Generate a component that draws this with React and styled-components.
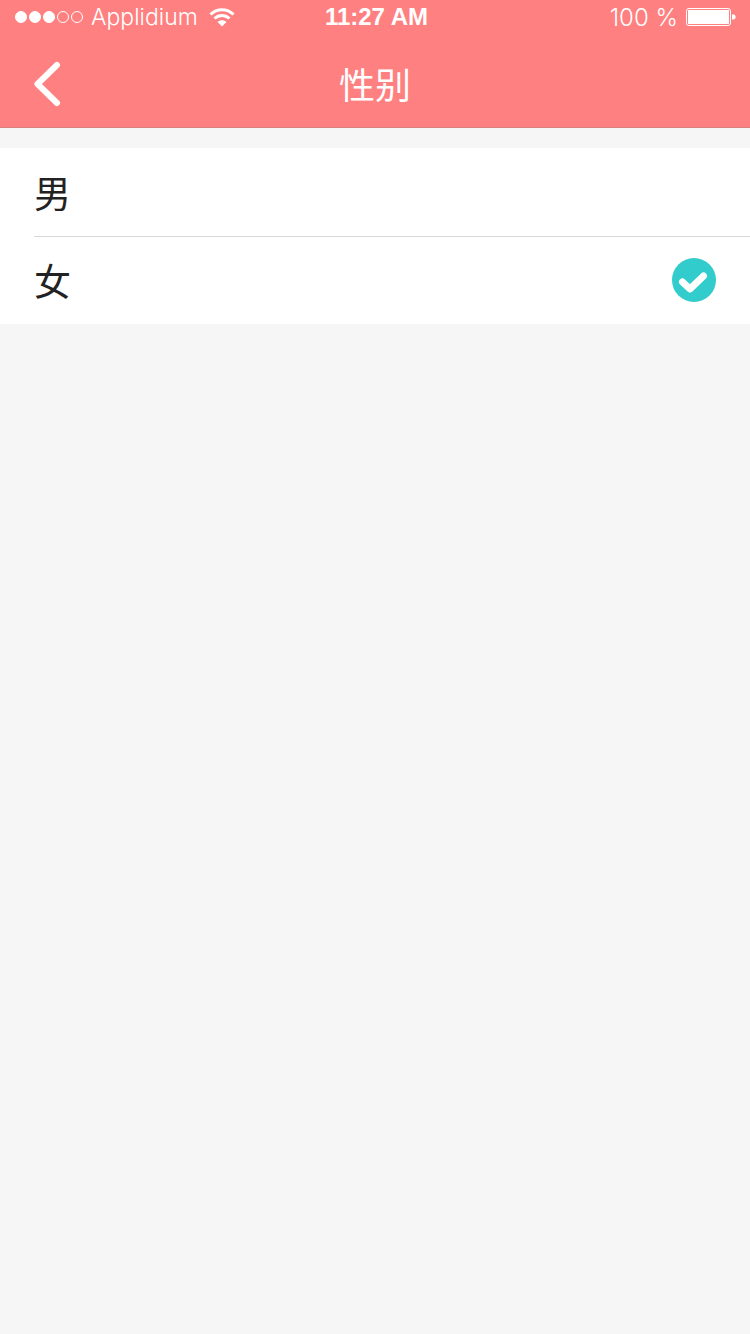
import React from "react";
import styled, { createGlobalStyle } from "styled-components";

const GlobalStyle = createGlobalStyle`
  html, body {
    margin: 0;
    padding: 0;
    background: #f6f6f6;
    font-family: "Liberation Sans", "Noto Sans CJK SC", sans-serif;
  }
`;

const Page = styled.div`
  width: 750px;
  height: 1334px;
  background: #f6f6f6;
  overflow: hidden;
`;

const Header = styled.header`
  height: 128px;
  box-sizing: border-box;
  background: #ff8080;
  border-bottom: 1px solid #d98080;
  color: #fff;
`;

const StatusBar = styled.div`
  height: 34px;
  display: grid;
  grid-template-columns: 1fr auto 1fr;
  align-items: center;
  padding: 0 14px 0 15px;
`;

const StatusLeft = styled.div`
  display: flex;
  align-items: center;
`;

const StatusRight = styled.div`
  display: flex;
  align-items: center;
  justify-content: flex-end;
`;

const Signal = styled.div`
  display: flex;
  gap: 2px;
  margin-right: 8px;
`;

const Dot = styled.span`
  width: 12px;
  height: 12px;
  box-sizing: border-box;
  border-radius: 50%;
  border: 1px solid #fff;
  background: ${(p) => (p.$on ? "#fff" : "transparent")};
`;

const Carrier = styled.span`
  font-family: Inter, sans-serif;
  font-size: 23px;
  font-weight: 300;
  margin-right: 11px;
`;

const Clock = styled.span`
  margin-left: 2px;
  font-size: 24px;
  font-weight: 700;
`;

const Percent = styled.span`
  font-family: Inter, sans-serif;
  font-size: 24px;
  font-weight: 300;
  margin-right: 8px;
`;

const NavBar = styled.div`
  position: relative;
  height: 93px;
  display: flex;
  align-items: center;
  justify-content: center;
`;

const BackButton = styled.button`
  position: absolute;
  left: 33px;
  top: 27px;
  width: 30px;
  height: 46px;
  padding: 0;
  border: 0;
  background: none;
  display: block;
`;

const Title = styled.h1`
  margin: 12px 0 0;
  font-size: 36px;
  font-weight: 400;
  line-height: 44px;
`;

const List = styled.ul`
  list-style: none;
  margin: 20px 0 0;
  padding: 0;
  background: #fff;
`;

const Row = styled.li`
  height: 88px;
  box-sizing: border-box;
  margin-left: 34px;
  padding: 0 34px ${(p) => (p.$divider ? "1px" : "0")} 0;
  display: flex;
  align-items: center;
  justify-content: space-between;
  border-top: ${(p) => (p.$divider ? "1px solid #d9d9d9" : "0")};
`;

const Label = styled.span`
  padding-top: 8px;
  font-size: 37px;
  font-weight: 400;
  color: #222;
  line-height: 44px;
`;

const WifiIcon = () => (
  <svg width="26" height="20" viewBox="0 0 26 20" fill="none" stroke="#fff" strokeWidth="3">
    <path d="M1.5 7.5C8 1 18 1 24.500 7.500" />
    <path d="M5.500 11.500C10 7.500 16 7.500 20.500 11.500" />
    <path d="M13 19.500L8.500 15C11 12.500 15 12.500 17.500 15Z" fill="#fff" stroke="none" />
  </svg>
);

const BatteryIcon = () => (
  <svg width="50" height="20" viewBox="0 0 50 20">
    <rect x="0.500" y="1.500" width="44" height="17" rx="2.500" fill="none" stroke="#fff" />
    <rect x="2" y="3" width="41" height="14" fill="#fff" />
    <path d="M46 7.500h1.500a2 2 0 0 1 2 2v1a2 2 0 0 1-2 2H46Z" fill="#fff" />
  </svg>
);

const BackIcon = () => (
  <svg width="30" height="46" viewBox="0 0 30 46" fill="none" stroke="#fff" strokeWidth="6" strokeLinecap="round" strokeLinejoin="round">
    <path d="M24 4L4.500 23L24 42" />
  </svg>
);

const CheckIcon = () => (
  <svg width="44" height="44" viewBox="0 0 44 44">
    <circle cx="22" cy="22" r="22" fill="#33cccc" />
    <path d="M10.500 24L18 31L31.500 18" fill="none" stroke="#fff" strokeWidth="7" strokeLinecap="round" strokeLinejoin="round" />
  </svg>
);

const App = () => {
  const options = [
    { name: "男", checked: false },
    { name: "女", checked: true },
  ];
  return (
    <Page>
      <GlobalStyle />
      <Header>
        <StatusBar>
          <StatusLeft>
            <Signal>
              {[true, true, true, false, false].map((on, i) => (
                <Dot key={i} $on={on} />
              ))}
            </Signal>
            <Carrier>Applidium</Carrier>
            <WifiIcon />
          </StatusLeft>
          <Clock>11:27 AM</Clock>
          <StatusRight>
            <Percent>100 %</Percent>
            <BatteryIcon />
          </StatusRight>
        </StatusBar>
        <NavBar>
          <BackButton>
            <BackIcon />
          </BackButton>
          <Title>性别</Title>
        </NavBar>
      </Header>
      <List>
        {options.map((o, i) => (
          <Row key={o.name} $divider={i > 0}>
            <Label>{o.name}</Label>
            {o.checked && <CheckIcon />}
          </Row>
        ))}
      </List>
    </Page>
  );
};

export default App;
